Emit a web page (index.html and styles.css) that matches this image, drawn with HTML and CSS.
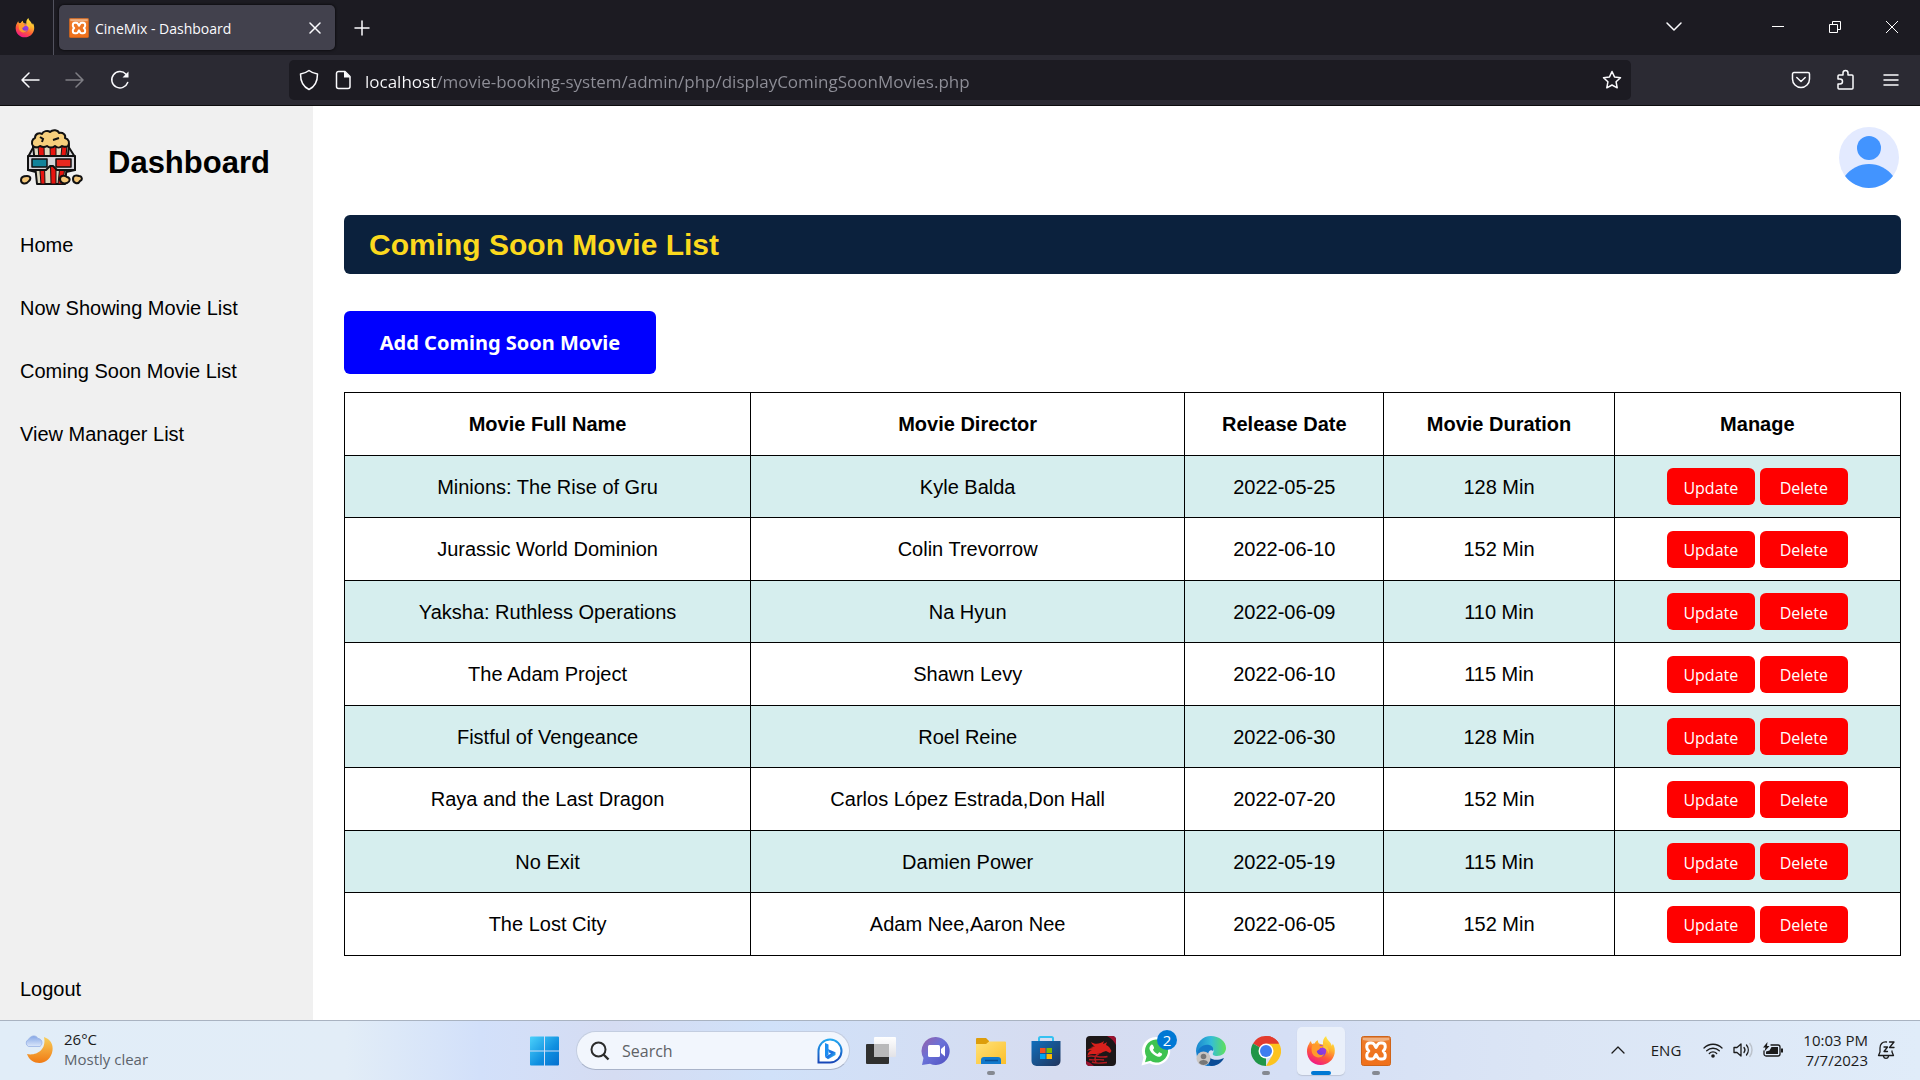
FILE: index.html
```html
<!DOCTYPE html>
<html lang="en">
<head>
<meta charset="utf-8">
<meta name="viewport" content="width=device-width, initial-scale=1">
<title>CineMix - Dashboard</title>
<link rel="stylesheet" href="styles.css">
</head>
<body>
<svg class="defs" aria-hidden="true">
  <defs>
    <linearGradient id="flame" x1="0.8" y1="0" x2="0.3" y2="1"><stop offset="0" stop-color="#fff14a"/><stop offset=".35" stop-color="#ffb52e"/><stop offset=".65" stop-color="#ff5a36"/><stop offset="1" stop-color="#f0148c"/></linearGradient>
    <linearGradient id="globe" x1="0" y1="1" x2="1" y2="0"><stop offset="0" stop-color="#5b3bd8"/><stop offset="1" stop-color="#b13be0"/></linearGradient>
    <linearGradient id="orange" x1="0" y1="0" x2="0" y2="1"><stop offset="0" stop-color="#e08a4e"/><stop offset=".2" stop-color="#ee7a28"/><stop offset="1" stop-color="#f0701a"/></linearGradient>
    <linearGradient id="win" gradientUnits="userSpaceOnUse" x1="0" y1="0" x2="29" y2="29"><stop offset="0" stop-color="#4cd2fb"/><stop offset=".6" stop-color="#0f8fe0"/><stop offset="1" stop-color="#0670cf"/></linearGradient>
    <linearGradient id="bing" x1="0" y1="0" x2="0" y2="1"><stop offset="0" stop-color="#22a7f0"/><stop offset="1" stop-color="#1747b8"/></linearGradient>
    <linearGradient id="bingMark" x1="0" y1="0" x2="1" y2="1"><stop offset="0" stop-color="#1b8df0"/><stop offset=".5" stop-color="#1c6fe0"/><stop offset="1" stop-color="#35d0f0"/></linearGradient>
    <linearGradient id="chat" x1="0" y1="0" x2="1" y2="1"><stop offset="0" stop-color="#9a5fa6"/><stop offset=".45" stop-color="#6a72d8"/><stop offset="1" stop-color="#4f4fc0"/></linearGradient>
    <linearGradient id="folder" x1="0" y1="0" x2="1" y2="1"><stop offset="0" stop-color="#ffe27a"/><stop offset="1" stop-color="#fcbf2a"/></linearGradient>
    <linearGradient id="store" x1="0" y1="0" x2="1" y2="1"><stop offset="0" stop-color="#0f6fbd"/><stop offset="1" stop-color="#22355c"/></linearGradient>
    <linearGradient id="edgeTop" x1="0" y1="0" x2="1" y2="0"><stop offset="0" stop-color="#1a86d0"/><stop offset=".5" stop-color="#35bdd8"/><stop offset="1" stop-color="#5fe05a"/></linearGradient>
    <linearGradient id="moon" x1="0" y1="0" x2="0" y2="1"><stop offset="0" stop-color="#f8cf5a"/><stop offset="1" stop-color="#f07a14"/></linearGradient>
    <linearGradient id="cloud" x1="0" y1="0" x2="0" y2="1"><stop offset="0" stop-color="#84a6e6"/><stop offset="1" stop-color="#dbe7fa"/></linearGradient>
    <linearGradient id="paper" x1="0" y1="0" x2="0" y2="1"><stop offset="0" stop-color="#fff"/><stop offset="1" stop-color="#e2e2e6"/></linearGradient>
  </defs>
  <symbol id="firefox" viewBox="0 0 30 30">
    <path fill="url(#flame)" d="M3 8c.6-1.600 1.400-2.600 2-3 .1 1.500.6 2.400 1.400 3 .5-.3 1.300-.5 2.200-.4C9.300 6 10.300 4.900 12 4.200c-.3 1.500.3 2.800 1.600 3.600l3.500.8c-.6-3.400.4-6.400 3-8.600.3 2.700 2 4 3.900 6.200 1 1.200 1.400 2.400 1.600 3.600.8-.4 1.100-1.200 1.100-2.200 2 3 2.500 6.400 1.900 10C27.300 24 22 29 14.600 29 7 29 1.200 23.500 1 15.800.9 12.600 1.700 10 3 8z"/>
    <circle cx="14" cy="15" r="6.200" fill="url(#globe)"/>
    <path fill="#ff9a2c" d="M6.500 8.500c3-1 6-.2 7.800 1.200l3.700.2c-.5 1.500-2 2-3.800 2.200-.6 1.600-2 1.900-3.400 3.100.5 3.500 4.200 4.800 7.400 2.800-1.500 3.400-5.700 4.600-9 2.600-3.600-2.200-4.600-7-2.700-12.100z"/>
    <path fill="#ffc533" d="M18 7.500c3.500 2 5.700 5.500 4.700 10.300-.9-3-2.700-5.200-5.700-6.200z"/>
  </symbol>
  <symbol id="xampp" viewBox="0 0 30 30">
    <rect x=".5" y=".5" width="29" height="29" rx="2" fill="url(#orange)" stroke="#cf6419"/>
    <path d="M2 2h26v2q-13 3-26 0z" fill="#f3c39c" opacity=".7"/>
    <path d="M15 11.500L13.300 8.500Q12.300 7 10.500 7H9Q5.800 7 5.800 10v1.500Q5.800 13 7.800 15 5.800 17 5.800 18.500V20Q5.800 23 9 23h1.500Q12.300 23 13.300 21.500L15 18.500l1.700 3Q17.700 23 19.500 23H21Q24.200 23 24.200 20v-1.500Q24.200 17 22.200 15 24.200 13 24.200 11.500V10Q24.200 7 21 7h-1.500Q17.700 7 16.700 8.500z" fill="none" stroke="#fff" stroke-width="3" stroke-linejoin="round"/>
  </symbol>
</svg>

<header class="browser">
  <div class="tab-strip">
    <div class="pinned"><svg width="20" height="20" aria-label="Firefox"><use href="#firefox"/></svg></div>
    <div class="tab">
      <svg width="20" height="20" aria-hidden="true"><use href="#xampp"/></svg>
      <span class="tab-title">CineMix - Dashboard</span>
      <button class="tab-close" aria-label="Close tab"><svg width="12" height="12" viewBox="0 0 12 12"><path d="M1 1l10 10M11 1L1 11" class="line-light"/></svg></button>
    </div>
    <button class="icon-button new-tab" aria-label="New tab"><svg width="16" height="16" viewBox="0 0 16 16"><path d="M8 1v14M1 8h14" class="line-light"/></svg></button>
    <div class="window-controls">
      <button class="icon-button list-tabs" aria-label="List all tabs"><svg width="18" height="12" viewBox="0 0 18 12"><path d="M2 2l7 7 7-7" class="line-light"/></svg></button>
      <button class="icon-button" aria-label="Minimize"><svg width="12" height="12" viewBox="0 0 12 12"><path d="M0 5.500h12" class="line-thin"/></svg></button>
      <button class="icon-button" aria-label="Restore"><svg width="12" height="12" viewBox="0 0 12 12"><path d="M.5 3.500h8v8h-8zM3.500 3.500v-3h8v8h-3" class="line-thin"/></svg></button>
      <button class="icon-button" aria-label="Close"><svg width="14" height="14" viewBox="0 0 14 14"><path d="M1 1l12 12M13 1L1 13" class="line-thin"/></svg></button>
    </div>
  </div>
  <div class="toolbar">
    <div class="history">
      <button class="icon-button" aria-label="Back"><svg width="20" height="18" viewBox="0 0 20 18"><path d="M19 9H2M9 2L2 9l7 7" class="line-light"/></svg></button>
      <button class="icon-button faded" aria-label="Forward"><svg width="20" height="18" viewBox="0 0 20 18"><path d="M1 9h17M11 2l7 7-7 7" class="line-light"/></svg></button>
      <button class="icon-button" aria-label="Reload"><svg width="20" height="20" viewBox="0 0 20 20"><path d="M17.700 12.500A8.200 8.200 0 1 1 16 4.200" class="line-light"/><path d="M18.500 1.500v6H12.500z" fill="#fbfbfe"/></svg></button>
    </div>
    <div class="address-bar">
      <svg width="20" height="22" viewBox="0 0 20 22"><path d="M10 1.500c2.500 2 5.300 3 8.500 3.500 0 7-2 12.500-8.500 15.500C3.500 17.500 1.500 12 1.500 5 4.700 4.500 7.500 3.500 10 1.500z" class="line-light"/></svg>
      <svg width="16" height="20" viewBox="0 0 16 20"><path d="M3.500 1.500h6.500l5 5v10a2 2 0 0 1-2 2H3.500a2 2 0 0 1-2-2v-13a2 2 0 0 1 2-2z" class="line-light"/><path d="M9 1l6.500 6.500H9z" fill="#fbfbfe"/></svg>
      <input class="address" type="text" aria-label="Address" value="localhost/movie-booking-system/admin/php/displayComingSoonMovies.php">
      <button class="bookmark" aria-label="Bookmark this page"><svg width="20" height="20" viewBox="0 0 20 20"><path d="M10 1.500l2.500 5.400 6 .8-4.400 4.100 1.100 6L10 15l-5.200 2.800 1.100-6L1.500 7.700l6-.8z" class="line-light"/></svg></button>
    </div>
    <div class="extras">
      <button class="icon-button" aria-label="Save to Pocket"><svg width="20" height="20" viewBox="0 0 20 20"><path d="M3 2.500h14a1.500 1.500 0 0 1 1.500 1.500v5a8.500 8.500 0 0 1-17 0V4A1.500 1.500 0 0 1 3 2.500zM5.800 7.500l4.200 4 4.200-4" class="line-light"/></svg></button>
      <button class="icon-button" aria-label="Extensions"><svg width="20" height="22" viewBox="0 0 20 22"><path d="M2 10V7a1 1 0 0 1 1-1h4V4a2.500 2.500 0 0 1 5 0v2h4a1 1 0 0 1 1 1v12a1 1 0 0 1-1 1H3a1 1 0 0 1-1-1v-4h2a2.500 2.500 0 0 0 0-5z" class="line-light"/></svg></button>
      <button class="icon-button" aria-label="Menu"><svg width="16" height="14" viewBox="0 0 16 14"><path d="M1 2h14M1 7h14M1 12h14" class="line-light"/></svg></button>
    </div>
  </div>
</header>

<div class="page">
  <aside class="sidebar">
    <div class="brand">
      <svg class="logo" viewBox="0 0 63 57" width="63" height="57" aria-hidden="true">
        <g stroke="#111" stroke-width="2" stroke-linejoin="round">
          <path d="M14 18L8 29v13l8 2V20zM48 18l7 11v13l-9 2V20z" fill="#d9d9dd"/>
          <path d="M13 17h36l-4 39H17z" fill="#e0d9c0"/>
          <path d="M18 18h6l1 38h-4zM30 18h6v38h-5zM42 18h5l-4 38h-5z" fill="#e8150f" stroke-width="1"/>
          <path d="M13 18c-2-3-1-7 2-8 0-4 4-6 7-4 1-3 6-4 8-2 3-3 8-2 9 1 4-1 7 2 6 5 4 1 5 5 3 8-3 2-5 0-6 0-2 2-5 2-7 0-2 2-6 2-8 0-3 2-5 1-7 0-3 2-5 2-7 0z" fill="#f6cf7c"/>
          <path d="M8 28h47v14H37l-4-4h-3l-4 4H8z" fill="#d5d4da"/>
          <path d="M12 31h15v8H12z" fill="#12839a" stroke-width="1.500"/>
          <path d="M36 31h15v8H36z" fill="#e8271f" stroke-width="1.500"/>
          <path d="M1 52c0-4 4-4 6-4 4 0 4 3 2 5-3 4-8 3-8-1z" fill="#f3c678"/>
          <path d="M40 51c0-4 5-4 7-2 4 1 3 5 0 6s-7 0-7-4z" fill="#f3c678"/>
          <path d="M53 51c0-4 4-4 6-3 3 0 4 4 1 5-2 4-7 2-7-2z" fill="#f3c678"/>
        </g>
        <path d="M20 9l3 2-1 3M33 12l6-2" stroke="#111" stroke-width="2" fill="none"/>
      </svg>
      <h1>Dashboard</h1>
    </div>
    <nav class="menu">
      <a href="#home">Home</a>
      <a href="#now-showing">Now Showing Movie List</a>
      <a href="#coming-soon">Coming Soon Movie List</a>
      <a href="#managers">View Manager List</a>
    </nav>
    <a class="logout" href="#logout">Logout</a>
  </aside>

  <main class="content">
    <div class="account">
      <svg width="60" height="61" viewBox="0 0 60 61" role="img" aria-label="Account"><ellipse cx="30" cy="30.500" rx="30" ry="30.500" fill="#e3eaff"/><circle cx="30" cy="21" r="12" fill="#4294ff"/><path d="M6 49a30 30 0 0 1 48 0 30 30 0 0 1-48 0z" fill="#4294ff"/></svg>
    </div>
    <h2 class="title-bar">Coming Soon Movie List</h2>
    <button class="add-button">Add Coming Soon Movie</button>
    <table class="movies">
      <colgroup><col class="col-name"><col class="col-director"><col class="col-date"><col class="col-duration"><col class="col-manage"></colgroup>
      <thead>
        <tr><th>Movie Full Name</th><th>Movie Director</th><th>Release Date</th><th>Movie Duration</th><th>Manage</th></tr>
      </thead>
      <tbody>
        <tr><td>Minions: The Rise of Gru</td><td>Kyle Balda</td><td>2022-05-25</td><td>128 Min</td><td><div class="actions"><button>Update</button><button>Delete</button></div></td></tr>
        <tr><td>Jurassic World Dominion</td><td>Colin Trevorrow</td><td>2022-06-10</td><td>152 Min</td><td><div class="actions"><button>Update</button><button>Delete</button></div></td></tr>
        <tr><td>Yaksha: Ruthless Operations</td><td>Na Hyun</td><td>2022-06-09</td><td>110 Min</td><td><div class="actions"><button>Update</button><button>Delete</button></div></td></tr>
        <tr><td>The Adam Project</td><td>Shawn Levy</td><td>2022-06-10</td><td>115 Min</td><td><div class="actions"><button>Update</button><button>Delete</button></div></td></tr>
        <tr><td>Fistful of Vengeance</td><td>Roel Reine</td><td>2022-06-30</td><td>128 Min</td><td><div class="actions"><button>Update</button><button>Delete</button></div></td></tr>
        <tr><td>Raya and the Last Dragon</td><td>Carlos López Estrada,Don Hall</td><td>2022-07-20</td><td>152 Min</td><td><div class="actions"><button>Update</button><button>Delete</button></div></td></tr>
        <tr><td>No Exit</td><td>Damien Power</td><td>2022-05-19</td><td>115 Min</td><td><div class="actions"><button>Update</button><button>Delete</button></div></td></tr>
        <tr><td>The Lost City</td><td>Adam Nee,Aaron Nee</td><td>2022-06-05</td><td>152 Min</td><td><div class="actions"><button>Update</button><button>Delete</button></div></td></tr>
      </tbody>
    </table>
  </main>
</div>

<footer class="taskbar">
  <div class="weather">
    <svg width="30" height="30" viewBox="0 0 30 30" aria-hidden="true"><path d="M20 3c6 2 9.500 7 8.500 13.500C27.500 24 22 29 15.500 29 10 29 5 26 3 20c8 2 20-3 17-17z" fill="url(#moon)"/><path d="M4.500 12.500a3.800 3.800 0 0 1 0-7C6 2 11.500 0 14 4.500c4 0 5.500 5.500 2 8z" fill="url(#cloud)" stroke="#8fabe2" stroke-width=".7"/></svg>
    <div class="weather-text"><span>26°C</span><span class="muted">Mostly clear</span></div>
  </div>

  <div class="apps">
    <button class="app" aria-label="Start"><svg width="30" height="30" viewBox="0 0 30 30"><path d="M1 .5h13v14H0V1.500a1 1 0 0 1 1-1zM15 .5h13a1 1 0 0 1 1 1v13H15zM0 15.500h14v14H1a1 1 0 0 1-1-1zM15 15.500h14v13a1 1 0 0 1-1 1H15z" fill="url(#win)"/></svg></button>
    <div class="search">
      <svg width="20" height="20" viewBox="0 0 20 20" aria-hidden="true"><circle cx="8.500" cy="8.500" r="7" fill="none" stroke="#2b2b2b" stroke-width="2"/><path d="M13.500 13.500l5 5" stroke="#2b2b2b" stroke-width="2.400"/></svg>
      <input type="search" aria-label="Search" placeholder="Search">
      <svg width="26" height="26" viewBox="0 0 26 26" aria-hidden="true"><path d="M1.500 24.500V13A11.500 11.500 0 1 1 13 24.500z" fill="#fff" stroke="url(#bing)" stroke-width="2"/><path d="M8 5l3.500 1.500V17l-3.500 2z" fill="#1b8df0"/><path d="M8 19l6-3.500-2-1-1.300-3.500 7.800 3.200V17l-7.500 4.200z" fill="url(#bingMark)"/></svg>
    </div>
    <button class="app" aria-label="Task view"><svg width="30" height="30" viewBox="0 0 30 30"><rect y="8" width="23" height="20" rx="1" fill="#30302f"/><rect x="8" y="1" width="22" height="20" rx="1" fill="url(#paper)"/><path d="M8 8h15v13H8z" fill="#b9b9ba"/></svg></button>
    <button class="app" aria-label="Chat"><svg width="30" height="30" viewBox="0 0 30 30"><path d="M15 1a14 14 0 1 1-6 26.800L1 29l1.500-7A14 14 0 0 1 15 1z" fill="url(#chat)"/><rect x="7" y="9" width="12" height="12" rx="1.500" fill="#fff"/><path d="M20 13l4-3.500v11L20 17z" fill="#fff"/></svg></button>
    <button class="app running" aria-label="File Explorer"><svg width="30" height="30" viewBox="0 0 30 30"><path d="M0 3a1 1 0 0 1 1-1h9l3 3v5H0z" fill="#dd9d0b"/><path d="M0 8h10l3-2.500h16a1 1 0 0 1 1 1V28H0z" fill="url(#folder)"/><path d="M5 28v-4a3 3 0 0 1 3-3h14a3 3 0 0 1 3 3v4z" fill="#1179cc"/><path d="M9 24.500h13" stroke="#0a4f93" stroke-width="1.500"/></svg></button>
    <button class="app" aria-label="Microsoft Store"><svg width="30" height="30" viewBox="0 0 30 30"><path d="M8 6V2.500A1.500 1.500 0 0 1 9.500 1h11A1.500 1.500 0 0 1 22 2.500V6" fill="none" stroke="#35c1f1" stroke-width="2"/><path d="M.5 5h29v20a5 5 0 0 1-5 5h-19a5 5 0 0 1-5-5z" fill="url(#store)"/><path d="M9 12h5.500v5H9z" fill="#f25022"/><path d="M15.500 12H21v5h-5.500z" fill="#7fba00"/><path d="M9 18h5.500v5H9z" fill="#00a4ef"/><path d="M15.500 18H21v5h-5.500z" fill="#ffb900"/></svg></button>
    <button class="app" aria-label="Dragon Center"><svg width="30" height="30" viewBox="0 0 30 30"><rect width="30" height="30" rx="4" fill="#1c1718"/><path d="M5 6c4 3 9 2 13-1l-1 3c2-1 3-1 4-2l-1 3c3 1 4 3 5.500 6l-1.500 2-4-2-3 1c-3 2-6 2-8 2-3 0-6 0-7.500 1.500C2 16 4 14.500 6 14.500c-2-.5-4-.5-5 .5 1-2 3-3 6-3-1-.500-2-1-3-.500 1-1 3-1 5-1C7 9.500 6 8 5 6z" fill="#d8201c"/><path d="M1.500 20.500c5-2 13 2 20 0M3 23.500c5 1 9-.500 15 .5M6 26c4 2 9 1 15 .5M13 17.500c-4 2-5 5-3 9" fill="none" stroke="#b51a20" stroke-width="1.400"/><path d="M21 0h5a4 4 0 0 1 4 4v5q-3-6-9-9zM0 25q4 1 8 5H4a4 4 0 0 1-4-4z" fill="#9c1230"/></svg></button>
    <button class="app" aria-label="WhatsApp"><svg width="30" height="30" viewBox="0 0 30 30"><path d="M15 1a14 14 0 1 1-6.500 26.300L.5 29.500l2-8A14 14 0 0 1 15 1z" fill="#fff"/><path d="M15 3.500a11.500 11.500 0 1 1-5.500 21.300L4 26.300l1.500-5.500A11.500 11.500 0 0 1 15 3.500z" fill="#3fc351"/><path d="M9.500 9.500c1.500-2 2.500-1 3.500 2 .4 1-.8 1.500-1 2.200 1 2 2.500 3.400 4.600 4.200.8-.4 1.300-2 2.300-1.400 2.600 1.300 2.700 1.500 1.600 3-2 2.500-6 1-9-2s-4-5.500-2-8z" fill="#fff"/></svg><span class="badge">2</span></button>
    <button class="app" aria-label="Microsoft Edge"><svg width="30" height="30" viewBox="0 0 30 30"><path d="M0 15A15 15 0 0 1 15 0c8 0 15 5 15 12 0 5-4 8-9 8-3 0-5-1-4-3 2-3-1-6-4-6-6 0-11 4-12 10z" fill="url(#edgeTop)"/><path d="M1 20C1 12 7 8 13 9c3 .500 5 3 4 6-2-2-5 0-5 4s4 9 10 9C13 33 2 29 1 20z" fill="#1479c9"/><path d="M12 17c0 6 7 9 16 5-2 5-8 8-13 8-4-2-6-9-3-13z" fill="#0b4c96"/><circle cx="7.500" cy="22.500" r="7" fill="#c9c5c2"/><circle cx="7.500" cy="20.500" r="2.800" fill="#777"/><path d="M3 27c0-4 9-4 9 0q-4.500 4-9 0z" fill="#777"/></svg></button>
    <button class="app running" aria-label="Google Chrome"><svg width="30" height="30" viewBox="0 0 30 30"><path d="M15 15L2 7.500a15 15 0 0 1 26 0z" fill="#e33b2e"/><path d="M15 15v15A15 15 0 0 1 2 7.500z" fill="#209648"/><path d="M15 7.500h13A15 15 0 0 1 15 30l6.500-11z" fill="#fcc31e"/><path d="M15 0A15 15 0 0 1 28 7.500H15z" fill="#e33b2e"/><circle cx="15" cy="15" r="7.500" fill="#fff"/><circle cx="15" cy="15" r="6" fill="#3f7df0"/></svg></button>
    <button class="app active" aria-label="Firefox"><svg width="30" height="30"><use href="#firefox"/></svg></button>
    <button class="app running" aria-label="XAMPP"><svg width="30" height="30"><use href="#xampp"/></svg></button>
  </div>

  <div class="tray">
    <button class="tray-button" aria-label="Show hidden icons"><svg width="14" height="10" viewBox="0 0 14 10"><path d="M1 8l6-6 6 6" class="line-dark"/></svg></button>
    <span class="language">ENG</span>
    <div class="status">
      <svg width="20" height="16" viewBox="0 0 20 16"><path d="M1 6a12.700 12.700 0 0 1 18 0M3.700 8.800a9 9 0 0 1 12.600 0M6.300 11.500a5.200 5.200 0 0 1 7.400 0" class="line-dark"/><circle cx="10" cy="14" r="1.800" fill="#1b1b1b"/></svg>
      <svg width="20" height="16" viewBox="0 0 20 16"><path d="M1 5.500h3L8 2v12l-4-3.500H1zM11 5.500a4 4 0 0 1 0 5M13.500 3a8 8 0 0 1 0 10" class="line-dark"/><path d="M16.500 1a11 11 0 0 1 0 14" fill="none" stroke="#bcc3cc" stroke-width="1.500"/></svg>
      <svg width="20" height="16" viewBox="0 0 20 16"><path d="M8 3h7a2 2 0 0 1 2 2v7a2 2 0 0 1-2 2H3a2 2 0 0 1-2-2V9" class="line-dark"/><path d="M8.500 5H15v7H3V9.500l3.500-1zM18 6.500h2v4h-2z" fill="#1b1b1b"/><path d="M4.500 0L0 5.500h2.500L1.500 9.500 6.500 4H4z" fill="#1b1b1b"/></svg>
    </div>
    <div class="clock"><span>10:03 PM</span><span>7/7/2023</span></div>
    <svg width="18" height="20" viewBox="0 0 18 20" role="img" aria-label="Notifications"><path d="M9.500 2C5 1.500 3 4.500 3 8v4l-1.500 3.500h15L15 12v-1M6.500 16.500a2.600 2.600 0 0 0 5 0M7 7h3.500L7 11.500h3.500M12.500 2H17l-4.500 5.500H17" class="line-dark"/></svg>
  </div>
</footer>
</body>
</html>
```
FILE: styles.css
```css
* { box-sizing: border-box; }

body {
  margin: 0;
  min-height: 100vh;
  display: flex;
  flex-direction: column;
  background: #fff;
  color: #000;
  font-family: "Liberation Sans", Arial, sans-serif;
  font-size: 20px;
}

button, input {
  border: 0;
  padding: 0;
  margin: 0;
  background: none;
  font: inherit;
  color: inherit;
}

svg { flex: none; display: block; }
a { color: inherit; text-decoration: none; }

.defs { position: absolute; width: 0; height: 0; }
.line-light { fill: none; stroke: #fbfbfe; stroke-width: 1.5; stroke-linecap: round; stroke-linejoin: round; }
.line-thin { fill: none; stroke: #fff; stroke-width: 1; }
.line-dark { fill: none; stroke: #1b1b1b; stroke-width: 1.3; stroke-linecap: round; stroke-linejoin: round; }

/* Browser window */
.browser {
  color: #fbfbfe;
  font-family: "Open Sans", "Noto Sans", sans-serif;
  border-bottom: 1px solid #0c0c0d;
}

.tab-strip { display: flex; height: 55px; background: #1c1b22; }
.pinned { display: flex; align-items: center; width: 54px; padding-left: 15px; border-right: 1px solid #52525e; }

.tab {
  display: flex;
  align-items: center;
  gap: 6px;
  width: 276px;
  margin: 5px 0 5px 5px;
  padding: 0 14px 0 10px;
  border-radius: 5px;
  background: #42414d;
  box-shadow: 0 0 3px #000;
}
.tab-title { flex: 1; padding-top: 1px; font-size: 14px; }

.icon-button { display: flex; align-items: center; justify-content: center; width: 45px; height: 40px; }
.new-tab { height: 55px; margin-left: 4px; }
.window-controls { display: flex; margin-left: auto; }
.window-controls .icon-button { width: 57px; height: 54px; }
.window-controls .list-tabs { margin-right: 47px; }

.toolbar { display: flex; align-items: center; height: 50px; background: #2b2a33; }
.history { display: flex; width: 289px; padding-left: 7px; }
.faded { opacity: .4; }

.address-bar {
  flex: 1;
  display: flex;
  align-items: center;
  height: 40px;
  padding: 0 9px 0 10px;
  border-radius: 5px;
  background: #1c1b22;
}
.address-bar svg + svg { margin-left: 16px; }
.address {
  flex: 1;
  min-width: 0;
  margin-left: 14px;
  padding-top: 2px;
  font-size: 17px;
  color: #8f8f98;
  background: linear-gradient(to right, #fbfbfe 72px, #8f8f98 72px);
  background-clip: text;
  -webkit-text-fill-color: transparent;
}
.extras { display: flex; justify-content: flex-end; width: 289px; padding-right: 7px; }

/* Dashboard page */
.page { flex: 1; display: flex; }

.sidebar { display: flex; flex-direction: column; width: 313px; padding: 22px 20px 19px; background: #f0f0f0; }
.brand { display: flex; align-items: center; gap: 25px; }
.brand h1 { margin: 12px 0 0; font-size: 31px; line-height: 36px; }
.menu { display: flex; flex-direction: column; gap: 39px; margin-top: 48px; }
.menu a, .logout { line-height: 24px; }
.logout { margin-top: auto; }

.content { flex: 1; display: flex; flex-direction: column; align-items: flex-start; padding: 21px 19px 20px 31px; }
.account { align-self: flex-end; margin-right: 2px; }
.title-bar {
  width: 100%;
  margin: 27px 0 37px;
  padding: 0 25px;
  border-radius: 6px;
  background: #0b213d;
  color: #fbd91e;
  font-size: 30px;
  line-height: 59px;
}
.add-button {
  width: 312px;
  height: 63px;
  margin-bottom: 18px;
  border-radius: 6px;
  background: #00f;
  color: #fff;
  font-family: "Noto Sans", "Open Sans", sans-serif;
  font-weight: 700;
}

.movies { width: 100%; table-layout: fixed; border-collapse: collapse; text-align: center; }
.movies th, .movies td { height: 63px; padding: 0; border: 1px solid #000; line-height: 24px; }
.movies tbody tr:nth-child(odd) { background: #d6eeee; }
.movies tbody tr:nth-child(odd) td { height: 62px; }
.col-name { width: 26.1%; }
.col-director { width: 27.9%; }
.col-date { width: 12.8%; }
.col-duration { width: 14.8%; }
.col-manage { width: 18.4%; }

.actions { display: flex; justify-content: center; gap: 5px; }
.actions button {
  width: 88px;
  height: 37px;
  padding-top: 2px;
  border-radius: 6px;
  background: #f00;
  color: #fff;
  font-family: "Open Sans", "Noto Sans", sans-serif;
  font-size: 16px;
}

/* Desktop taskbar */
.taskbar {
  display: grid;
  grid-template-columns: 1fr auto 1fr;
  align-items: center;
  height: 60px;
  border-top: 1px solid #a9b3c1;
  background: linear-gradient(to right, #e1edf8 0, #e2edf7 18%, #d2e0fa 25%, #d5dcf2 32%, #d0e1f9 40%, #d6dcf0 55%, #d5dff5 67%, #dbe5f5 80%, #e0ecf9 100%);
  color: #1b1b1b;
  font-family: "Open Sans", "Noto Sans", sans-serif;
  font-size: 15px;
  line-height: 20px;
}
.weather { display: flex; align-items: center; gap: 10px; padding: 0 0 3px 24px; }
.weather-text, .clock { display: flex; flex-direction: column; }
.muted { color: #5c636b; }

.apps { display: flex; align-items: center; }
.app { position: relative; display: flex; align-items: center; justify-content: center; width: 55px; height: 58px; }
.app svg { position: relative; }
.running::after, .active::after {
  content: "";
  position: absolute;
  bottom: 5px;
  left: 50%;
  width: 8px;
  height: 4px;
  border-radius: 2px;
  transform: translateX(-50%);
  background: #858991;
}
.active::before { content: ""; position: absolute; inset: 5px 3px 5px 4px; border-radius: 5px; background: #eaf0fa; box-shadow: 0 1px 1px #bcc4d6; }
.active::after { width: 20px; background: #0078d4; }
.badge {
  position: absolute;
  top: 8px;
  right: 6px;
  width: 20px;
  height: 20px;
  border-radius: 50%;
  background: #0078d4;
  color: #fff;
}

.search {
  display: flex;
  align-items: center;
  gap: 12px;
  width: 274px;
  height: 39px;
  margin: 0 3px 0 4px;
  padding: 0 6px 0 13px;
  border: 1px solid #c3cde0;
  border-bottom-color: #a9b3c9;
  border-radius: 20px;
  background: #f2f6fd;
}
.search input { flex: 1; min-width: 0; font-size: 16px; }
.search input::placeholder { color: #5f6266; opacity: 1; }

.tray { display: flex; align-items: center; justify-content: flex-end; padding: 0 25px 2px 0; }
.language { margin: 0 22px 0 26px; }
.status { display: flex; gap: 10px; margin-right: 20px; }
.clock { text-align: right; margin-right: 9px; }
```
